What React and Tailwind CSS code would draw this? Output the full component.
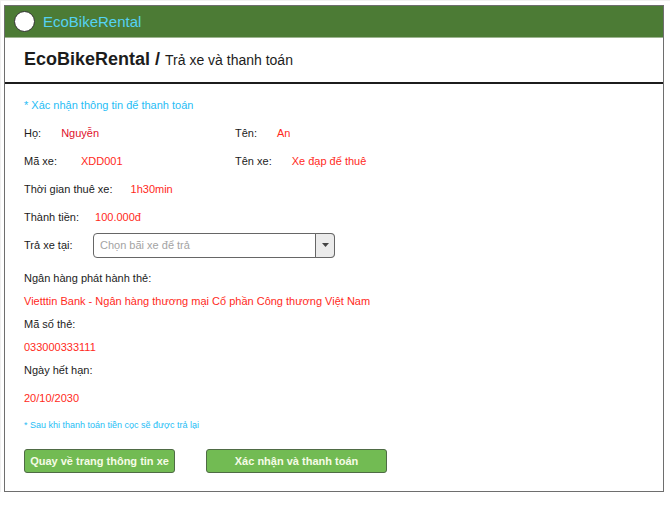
function Field({ label, value, gap, valueColor = "text-[#ff2a1c]", className = "" }) {
  return (
    <div className={`flex ${gap} ${className}`}>
      <dt>{label}</dt>
      <dd className={valueColor}>{value}</dd>
    </div>
  );
}

export default function App() {
  return (
    <div className="border-t border-l border-[#f0f0f0] bg-white pt-1 pr-[6px] pl-[3px] font-['Liberation_Sans',Arial,sans-serif] text-[11px] text-[#1c1c1c]">
      <div className="border border-[#6e6e6e]">
        <header className="flex h-8 items-center gap-2 border-b border-[#9db48f] bg-[#4c7b35] pl-[9px]">
          <span className="size-[21px] rounded-full border border-[#333333] bg-white" />
          <span className="text-[15px] leading-5 text-[#55d2f2]">EcoBikeRental</span>
        </header>

        <h1 className="flex h-[46px] items-baseline gap-[5px] border-b-2 border-[#1c1c1c] pt-[7px] pl-[19px]">
          <span className="text-lg leading-7 font-bold">EcoBikeRental /</span>
          <span className="text-sm font-normal">Trả xe và thanh toán</span>
        </h1>

        <form className="px-[19px] pt-[7px] pb-[18px]" onSubmit={(e) => e.preventDefault()}>
          <p className="leading-7 text-[#1fbdf5]">* Xác nhận thông tin để thanh toán</p>

          <dl className="leading-7">
            <div className="flex">
              <Field label="Họ:" value="Nguyễn" gap="gap-5" valueColor="text-[#e0102a]" className="w-[211px]" />
              <Field label="Tên:" value="An" gap="gap-5" />
            </div>
            <div className="flex">
              <Field label="Mã xe:" value="XDD001" gap="gap-6" className="w-[211px]" />
              <Field label="Tên xe:" value="Xe đạp để thuê" gap="gap-5" />
            </div>
            <Field label="Thời gian thuê xe:" value="1h30min" gap="gap-[18px]" />
            <Field label="Thành tiền:" value="100.000đ" gap="gap-4" />
          </dl>

          <div className="flex h-7 items-center">
            <label htmlFor="station" className="w-[69px]">Trả xe tại:</label>
            <div className="relative w-[242px]">
              <select
                id="station"
                defaultValue=""
                className="block h-[25px] w-full appearance-none rounded border border-[#666666] bg-white pr-6 pl-[6px] text-[#a3a3a3]"
              >
                <option value="">Chọn bãi xe để trả</option>
              </select>
              <span className="pointer-events-none absolute inset-y-0 right-0 flex w-5 items-center justify-center rounded-r border border-[#666666] bg-[#ebebeb]">
                <svg width="7" height="4" viewBox="0 0 7 4" aria-hidden="true">
                  <path d="M0 0h7L3.5 4z" fill="#444444" />
                </svg>
              </span>
            </div>
          </div>

          <dl className="pt-2 leading-[23px]">
            <dt>Ngân hàng phát hành thẻ:</dt>
            <dd className="text-[#ff2a1c]">Vietttin Bank - Ngân hàng thương mại Cổ phần Công thương Việt Nam</dd>
            <dt>Mã số thẻ:</dt>
            <dd className="text-[#ff2a1c]">033000333111</dd>
            <dt>Ngày hết hạn:</dt>
            <dd className="pt-[5px] text-[#ff2a1c]">20/10/2030</dd>
          </dl>

          <p className="pt-1 text-[9px] leading-[23px] text-[#1fbdf5]">* Sau khi thanh toán tiền cọc sẽ được trả lại</p>

          <div className="flex gap-[31px] pt-3">
            <button type="button" className="h-6 w-[151px] rounded-[3px] border border-[#4f6b45] bg-[#72bb53] font-bold text-[#f6fbe6]">
              Quay về trang thông tin xe
            </button>
            <button type="submit" className="h-6 w-[181px] rounded-[3px] border border-[#4f6b45] bg-[#72bb53] font-bold text-[#f6fbe6]">
              Xác nhận và thanh toán
            </button>
          </div>
        </form>
      </div>
    </div>
  );
}
